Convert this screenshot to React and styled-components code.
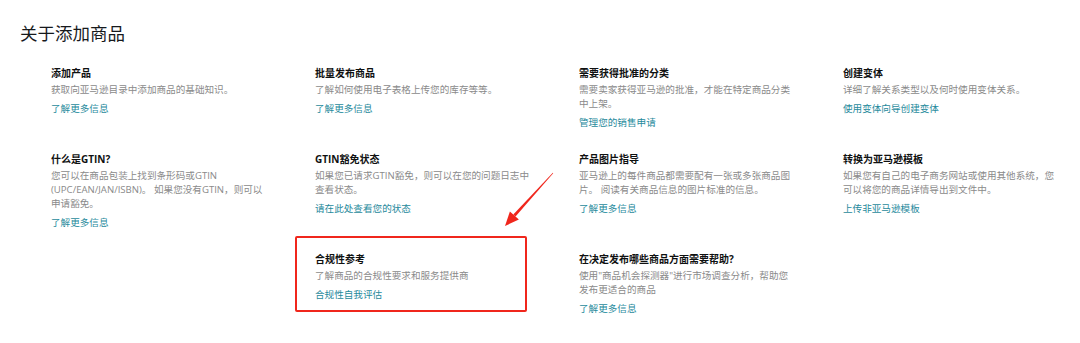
import React from 'react';
import styled, { createGlobalStyle } from 'styled-components';

const sections = [
  {
    title: '添加产品',
    lines: ['获取向亚马逊目录中添加商品的基础知识。'],
    link: '了解更多信息',
  },
  {
    title: '批量发布商品',
    lines: ['了解如何使用电子表格上传您的库存等等。'],
    link: '了解更多信息',
  },
  {
    title: '需要获得批准的分类',
    lines: ['需要卖家获得亚马逊的批准，才能在特定商品分类', '中上架。'],
    link: '管理您的销售申请',
  },
  {
    title: '创建变体',
    lines: ['详细了解关系类型以及何时使用变体关系。'],
    link: '使用变体向导创建变体',
  },
  {
    title: '什么是GTIN?',
    lines: ['您可以在商品包装上找到条形码或GTIN', '(UPC/EAN/JAN/ISBN)。 如果您没有GTIN，则可以', '申请豁免。'],
    link: '了解更多信息',
  },
  {
    title: 'GTIN豁免状态',
    lines: ['如果您已请求GTIN豁免，则可以在您的问题日志中', '查看状态。'],
    link: '请在此处查看您的状态',
  },
  {
    title: '产品图片指导',
    lines: ['亚马逊上的每件商品都需要配有一张或多张商品图', '片。 阅读有关商品信息的图片标准的信息。'],
    link: '了解更多信息',
  },
  {
    title: '转换为亚马逊模板',
    lines: ['如果您有自己的电子商务网站或使用其他系统，您', '可以将您的商品详情导出到文件中。'],
    link: '上传非亚马逊模板',
  },
  {
    title: '合规性参考',
    lines: ['了解商品的合规性要求和服务提供商'],
    link: '合规性自我评估',
    start: 2,
    highlight: true,
  },
  {
    title: '在决定发布哪些商品方面需要帮助?',
    lines: ['使用"商品机会探测器"进行市场调查分析，帮助您', '发布更适合的商品'],
    link: '了解更多信息',
  },
];

const App = () => {
  return (
    <>
      <GlobalStyle />
      <Page>
        <Heading>关于添加商品</Heading>
        <Grid>
          {sections.map((s) => (
            <Card key={s.title} $start={s.start} $highlight={s.highlight}>
              <CardTitle>{s.title}</CardTitle>
              <CardText>
                {s.lines.map((line, i) => (
                  <span key={i}>
                    {line}
                    {i < s.lines.length - 1 && <br />}
                  </span>
                ))}
              </CardText>
              <CardLink href="#">{s.link}</CardLink>
            </Card>
          ))}
        </Grid>
        <Arrow viewBox="0 0 60 64" width="60" height="64">
          <polygon points="53.2,5.2 52.8,4.8 13.3,46.6 15.5,48.6" fill="#f0261c" />
          <polygon points="5,58 9.9,43.6 18.9,51.6" fill="#f0261c" />
        </Arrow>
      </Page>
    </>
  );
};

export default App;

// Styled components
const GlobalStyle = createGlobalStyle`
  html, body {
    margin: 0;
    background: #ffffff;
    overflow: hidden;
  }
  body {
    font-family: "Open Sans", "Noto Sans CJK SC", sans-serif;
  }
`;

const Page = styled.div`
  position: relative;
  width: 1080px;
  height: 343px;
  padding: 21px 0 0 20px;
  box-sizing: border-box;
`;

const Heading = styled.h1`
  margin: 0;
  font-size: 17.5px;
  line-height: 24px;
  font-weight: 400;
  color: #16191c;
`;

const Grid = styled.div`
  display: grid;
  grid-template-columns: repeat(4, 225px);
  column-gap: 39px;
  row-gap: 22px;
  align-items: start;
  margin: 21px 0 0 31px;
`;

const Card = styled.div`
  position: relative;
  display: flex;
  flex-direction: column;
  grid-column-start: ${(p) => p.$start || 'auto'};

  ${(p) =>
    p.$highlight &&
    `
    &::after {
      content: '';
      position: absolute;
      left: -20px;
      top: -16px;
      width: 232px;
      height: 76px;
      border: 2px solid #f0261c;
      border-radius: 2px;
      box-sizing: border-box;
    }
  `}
`;

const CardTitle = styled.div`
  font-size: 10px;
  line-height: 14px;
  font-weight: 700;
  color: #0f1111;
  margin-bottom: 3px;
`;

const CardText = styled.div`
  font-size: 9.6px;
  line-height: 14px;
  color: #8a8a8a;
  white-space: nowrap;
`;

const CardLink = styled.a`
  margin-top: 5px;
  font-size: 9.6px;
  line-height: 14px;
  color: #1f8a9c;
  text-decoration: none;
`;

const Arrow = styled.svg`
  position: absolute;
  left: 500px;
  top: 168px;
  pointer-events: none;
`;
